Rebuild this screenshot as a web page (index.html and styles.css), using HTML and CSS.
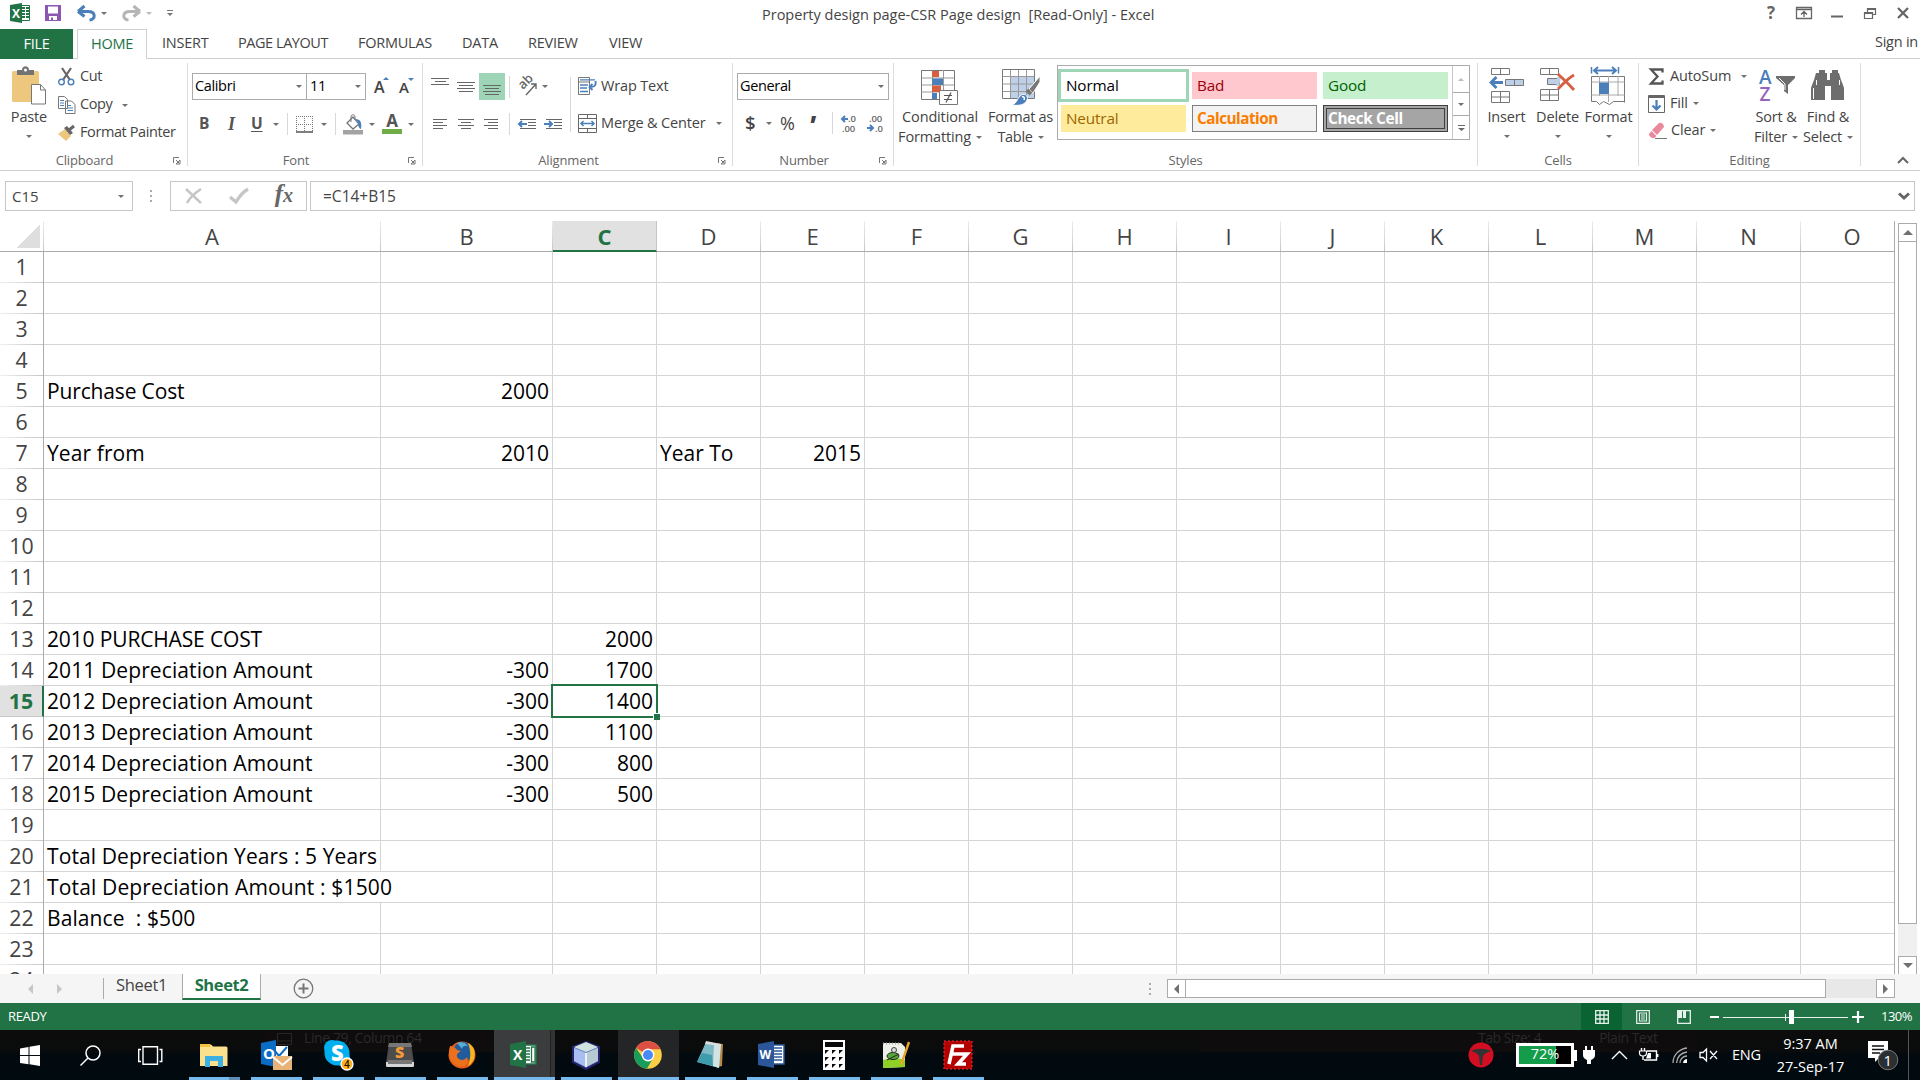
FILE: index.html
```html
<!DOCTYPE html>
<html lang="en">
<head>
<meta charset="utf-8">
<title>Property design page-CSR Page design [Read-Only] - Excel</title>
<link rel="stylesheet" href="styles.css">
</head>
<body>
<div class="app">

<header class="titlebar">
  <div class="quick">
    <svg width="21" height="20" viewBox="0 0 21 20"><path d="M11 2.500h8.500v15H11z" fill="#fff" stroke="#217346"/><path d="M12 5h3M12 8h3M12 11h3M12 14h3M16 5h3M16 8h3M16 11h3M16 14h3" stroke="#217346" stroke-width="2"/><path d="M0 2 12 0v20L0 18z" fill="#217346"/><text x="2" y="14.500" font-size="12" font-weight="700" fill="#fff">X</text></svg>
    <svg width="16" height="16" viewBox="0 0 16 16"><path d="M0 0h16v16H0z" fill="#8c57b0"/><path d="M3 1.500h10v7H3z" fill="#fff"/><path d="M4 11h8v4H4z" fill="#fff"/><path d="M6 12.500h2V15H6z" fill="#8c57b0"/></svg>
    <svg width="19" height="17" viewBox="0 0 19 17"><path d="M1 6.500 7.500 1M1 6.500l6.500 5M2 6.500h9c8 0 8 8 1.500 8.500" fill="none" stroke="#4a7fba" stroke-width="3"/></svg>
    <i class="dd"></i>
    <svg width="19" height="17" viewBox="0 0 19 17"><path d="M18 6.500 11.500 1M18 6.500l-6.500 5M17 6.500H8c-8 0-8 8-1.500 8.500" fill="none" stroke="#b5b5b5" stroke-width="3"/></svg>
    <i class="dd pale"></i>
    <svg width="6" height="6" viewBox="0 0 6 6"><path d="M0 .5h6" stroke="#777"/><path d="M0 3h6L3 6z" fill="#777"/></svg>
  </div>
  <div class="caption">Property design page-CSR Page design&nbsp; [Read-Only] - Excel</div>
  <div class="winbtns">
    <b>?</b>
    <svg width="17" height="13" viewBox="0 0 17 13"><path d="M.5.5h15v11H.500zM1 2.500h14M8 10V5M5 7.500l3-3 3 3" fill="none" stroke="#666" stroke-width="1.300"/></svg>
    <svg width="12" height="13" viewBox="0 0 12 13"><path d="M0 9.500h12" stroke="#666" stroke-width="2"/></svg>
    <svg width="13" height="13" viewBox="0 0 13 13"><path d="M.5 5.500h8v6h-8zM.5 6.500h8M3.500 5V1.500h8v6H9M3.500 2.500h8" fill="none" stroke="#666" stroke-width="1.200"/></svg>
    <svg width="13" height="13" viewBox="0 0 13 13"><path d="m1 1 10 10M11 1 1 11" stroke="#666" stroke-width="2.300"/></svg>
  </div>
</header>

<nav class="tabs">
  <span class="file">FILE</span><span class="home">HOME</span><span class="t1">INSERT</span><span class="t2">PAGE LAYOUT</span><span class="t3">FORMULAS</span><span class="t4">DATA</span><span class="t5">REVIEW</span><span class="t6">VIEW</span><span class="signin">Sign in</span>
</nav>

<section class="ribbon">
  <div class="group g-clip">
    <div class="controls">
      <div class="big">
        <svg width="36" height="40" viewBox="0 0 36 40"><rect x="1" y="5" width="27" height="31" rx="1.500" fill="#eec77f"/><path d="M6 4h5c0-5 7-5 7 0h5v5H6z" fill="#737373"/><circle cx="14.500" cy="4" r="1.500" fill="#fff"/><path d="M20.500 18.500h9l5 5.500v14H20.500z" fill="#fff" stroke="#777"/><path d="M29.500 18.500V24h5" fill="none" stroke="#777"/></svg>
        <span>Paste</span><i class="dd"></i>
      </div>
      <div class="stack">
        <div><svg width="18" height="18" viewBox="0 0 18 18"><path d="m4 0 8 12M13 0 5 12" stroke="#666" stroke-width="2.200"/><circle cx="3.500" cy="14" r="2.800" fill="#fff" stroke="#4a7fba" stroke-width="1.400"/><circle cx="13" cy="14" r="2.800" fill="#fff" stroke="#4a7fba" stroke-width="1.400"/></svg><span>Cut</span></div>
        <div><svg width="18" height="18" viewBox="0 0 18 18"><path d="M.5.5h6l3 3v9h-9zM7.500 5h6l3.500 3.500v9H7.500z" fill="#fff" stroke="#777"/><path d="M2 4.500h4M2 7h4M2 9.500h4M9.500 9.500H13M9.500 12H15M9.500 14.500H15" stroke="#4a7fba"/></svg><span>Copy</span><i class="dd"></i></div>
        <div><svg width="18" height="16" viewBox="0 0 18 16"><path d="m0 9 7-5 6 7-5 5z" fill="#eec77f"/><path d="m6 3 3-2 6 7-3 2z" fill="#666"/><path d="m11 5 5-4" stroke="#666" stroke-width="3"/></svg><span>Format Painter</span></div>
      </div>
    </div>
    <div class="glabel">Clipboard</div><svg class="launch" width="8" height="8" viewBox="0 0 8 8"><path d="M.5 6V.5H6M3 3l3 3M7 3v4H3z" fill="none" stroke="#777"/></svg>
  </div>

  <div class="group g-font">
    <div class="combos"><div class="combo">Calibri<i class="dd"></i></div><div class="combo">11<i class="dd"></i></div><span class="grow">A<i class="up"></i></span><span class="grow small">A<i class="dn"></i></span></div>
    <div class="row2">
      <b>B</b><b class="it">I</b><b class="un">U</b><i class="dd"></i><i class="sep"></i>
      <svg width="17" height="17" viewBox="0 0 17 17"><path d="M.5 0v16M8.500 0v16M16.500 0v16M0 .5h17M0 8.500h17" stroke="#777" stroke-dasharray="1 1"/><path d="M0 16h17" stroke="#555" stroke-width="1.500"/></svg><i class="dd"></i><i class="sep"></i>
      <svg width="20" height="21" viewBox="0 0 20 21"><path d="m4 9 6-6 6 7-6 5z" fill="#fff" stroke="#777" stroke-width="1.300"/><path d="M8 8V3c0-3 4-3 4 0v3" fill="none" stroke="#777"/><path d="M12 5c6 0 7 4 6 10-3-1-3-5-3-7z" fill="#4a7fba"/><path d="M0 16h20v4.500H0z" fill="#a3a3a3"/></svg><i class="dd"></i>
      <span class="fontcolor">A</span><i class="dd"></i>
    </div>
    <div class="glabel">Font</div><svg class="launch" width="8" height="8" viewBox="0 0 8 8"><path d="M.5 6V.5H6M3 3l3 3M7 3v4H3z" fill="none" stroke="#777"/></svg>
  </div>

  <div class="group g-align">
    <div class="alignbox">
      <div class="al1">
        <svg width="18" height="18" viewBox="0 0 18 18"><path d="M0 .5h18M4 3.500h11M0 6.500h18" stroke="#666"/></svg>
        <svg width="18" height="18" viewBox="0 0 18 18"><path d="M0 4.500h18M2 7.500h14M0 10.500h18M2 13.500h14" stroke="#666"/></svg>
        <span class="on"><svg width="18" height="18" viewBox="0 0 18 18"><path d="M0 8.500h18M2 11.500h14M0 14.500h18M2 17.500h14" stroke="#666"/></svg></span>
        <i class="sep"></i>
        <svg width="20" height="20" viewBox="0 0 20 20"><text transform="translate(5 13) rotate(-45)" font-size="13" font-weight="600" fill="#666">ab</text><path d="M8 18 18 7M13 7h5v5" fill="none" stroke="#666" stroke-width="1.400"/></svg><i class="dd"></i>
      </div>
      <div class="al2">
        <svg width="14" height="10" viewBox="0 0 14 10"><path d="M0 .5h14M0 3.500h10M0 6.500h14M0 9.500h10" stroke="#666"/></svg>
        <svg width="16" height="10" viewBox="0 0 16 10"><path d="M0 .5h16M3 3.500h10M0 6.500h16M3 9.500h10" stroke="#666"/></svg>
        <svg width="14" height="10" viewBox="0 0 14 10"><path d="M0 .5h14M4 3.500h10M0 6.500h14M4 9.500h10" stroke="#666"/></svg>
        <i class="sep"></i>
        <svg width="18" height="10" viewBox="0 0 18 10"><path d="M2 .5h16M10 3.500h8M10 6.500h8M2 9.500h16" stroke="#666"/><path d="M9 5H1M4 2 1 5l3 3" fill="none" stroke="#4a7fba" stroke-width="2"/></svg>
        <svg width="18" height="10" viewBox="0 0 18 10"><path d="M2 .5h16M10 3.500h8M10 6.500h8M2 9.500h16" stroke="#666"/><path d="M0 5h8M5 2l3 3-3 3" fill="none" stroke="#4a7fba" stroke-width="2"/></svg>
      </div>
    </div>
    <i class="tallsep"></i>
    <div class="wrapbox">
      <div><svg width="19" height="19" viewBox="0 0 19 19"><path d="M.5.5h11v17H.500zM.5 5h11" fill="#fff" stroke="#777"/><path d="M2 2.800h15M2 8h8M2 11h7M2 14.500h8" stroke="#4a7fba" stroke-width="1.300"/><path d="M17.500 4c1 5-2 6-5 6M14.500 7l-3 3 3 3" fill="none" stroke="#4a7fba" stroke-width="1.900"/></svg><span>Wrap Text</span></div>
      <div><svg width="19" height="19" viewBox="0 0 19 19"><path d="M.5.5h18v18H.500zM.5 4.500h18M.5 14.500h18M9.500 0v4.500M9.500 14.500V19" fill="#fff" stroke="#666"/><path d="M3 9.500h13M5.500 7 3 9.500 5.500 12M13.500 7 16 9.500 13.500 12" fill="none" stroke="#4a7fba" stroke-width="1.500"/></svg><span>Merge &amp; Center</span><i class="dd"></i></div>
    </div>
    <div class="glabel">Alignment</div><svg class="launch" width="8" height="8" viewBox="0 0 8 8"><path d="M.5 6V.5H6M3 3l3 3M7 3v4H3z" fill="none" stroke="#777"/></svg>
  </div>

  <div class="group g-num">
    <div class="combo">General<i class="dd"></i></div>
    <div class="row2"><span class="dollar">$</span><i class="dd"></i><span class="pct">%</span><span class="comma">,</span><i class="sep"></i>
      <svg width="17" height="19" viewBox="0 0 17 19"><path d="M7 5H1M4 2 1 5l3 3" fill="none" stroke="#4a7fba" stroke-width="2"/><text x="7" y="8" font-size="9.500" font-weight="600" fill="#666">.0</text><text x="1" y="17.500" font-size="9.500" font-weight="600" fill="#666">.00</text></svg>
      <svg width="17" height="19" viewBox="0 0 17 19"><path d="M0 14h6M3 11l3 3-3 3" fill="none" stroke="#4a7fba" stroke-width="2"/><text x="2" y="8" font-size="9.500" font-weight="600" fill="#666">.00</text><text x="8" y="17.500" font-size="9.500" font-weight="600" fill="#666">.0</text></svg>
    </div>
    <div class="glabel">Number</div><svg class="launch" width="8" height="8" viewBox="0 0 8 8"><path d="M.5 6V.5H6M3 3l3 3M7 3v4H3z" fill="none" stroke="#777"/></svg>
  </div>

  <div class="group g-styles">
    <div class="big two cond">
      <svg width="38" height="38" viewBox="0 0 38 38"><path d="M.500 3.500h33v29H.500z" fill="#fff" stroke="#777"/><path d="M.5 11h33M.5 18h33M.5 25h33M11.500 3v29M22.500 3v29" stroke="#999"/><path d="M11 4h7v6h-7zM11 18.500h9V25h-9z" fill="#d65f40"/><path d="M11 11.500h11V18H11zM11 26h5v6h-5z" fill="#4a7fba"/><path d="M18.500 23.500h18v14h-18z" fill="#fff" stroke="#777"/><path d="M23 28.500h8M23 32.500h8M30 25.500l-5 10" stroke="#555" stroke-width="1.200"/></svg>
      <span>Conditional</span><span>Formatting<i class="dd"></i></span>
    </div>
    <div class="big two fat">
      <svg width="38" height="38" viewBox="0 0 38 38"><path d="M.5 2.500h32v29H.500z" fill="#fff" stroke="#777"/><path d="M9 10h23v21H9z" fill="#bdd0e8"/><path d="M.5 9.500h32M.5 17h32M.5 24.500h32M8.500 3v28M16.500 3v28M24.500 3v28" stroke="#999"/><path d="M38 9 27 22l4 4 7-11z" fill="#777" stroke="#fff"/><path d="m25 23 4 4" stroke="#777" stroke-width="4"/><path d="M10 38c5-2 5-6 8-9 4-4 9 0 7 4-2 5-8 6-15 5z" fill="#4a7fba" stroke="#fff"/><path d="M20 30c2-1 3 1 2 3" stroke="#fff" fill="none" stroke-width="1.500"/></svg>
      <span>Format as</span><span>Table<i class="dd"></i></span>
    </div>
    <div class="gallery">
      <div class="swatches"><div class="normal">Normal</div><div class="bad">Bad</div><div class="good">Good</div><div class="neutral">Neutral</div><div class="calc">Calculation</div><div class="check">Check Cell</div></div>
      <div class="gscroll"><span><i class="upg"></i></span><span><i class="dd"></i></span><span><svg width="7" height="6" viewBox="0 0 7 6"><path d="M0 .5h7" stroke="#666"/><path d="M0 3h7L3.500 6z" fill="#666"/></svg></span></div>
    </div>
    <div class="glabel">Styles</div>
  </div>

  <div class="group g-cells">
    <div class="big">
      <svg width="37" height="38" viewBox="0 0 37 38"><path d="M3.500 1.500h18v6h-18zM12.500 1.500v6M3.500 24.500h18v11h-18zM12.500 24v12M3.500 30h18" fill="#fff" stroke="#777"/><path d="M17.500 12.500h18v6h-18zM26.500 12.500v6" fill="#bdd0e8" stroke="#777"/><path d="M15 15.500H3M8.500 10 3 15.500 8.500 21" fill="none" stroke="#4a7fba" stroke-width="2.800"/></svg>
      <span>Insert</span><i class="dd"></i>
    </div>
    <div class="big">
      <svg width="37" height="38" viewBox="0 0 37 38"><path d="M1.500 1.500h18v6h-18zM10.500 1.500v6M1.500 22.500h18v11h-18zM10.500 22v12M1.500 28h18" fill="#fff" stroke="#777"/><path d="M8.500 11.500h12v6h-12z" fill="#bdd0e8" stroke="#777"/><path d="M18 10h4l-2 9h-3z" fill="#bdd0e8"/><path d="M19 7c5 5 9 8 16 16M35 8C28 12 24 17 19 22" stroke="#d65f40" stroke-width="2.800" fill="none"/></svg>
      <span>Delete</span><i class="dd"></i>
    </div>
    <div class="big">
      <svg width="37" height="38" viewBox="0 0 37 38"><path d="M1.500 9.500h33v26M1.500 9.500v25h5l3 3 4-3 6 3 4-3h11" fill="#fff" stroke="#777"/><path d="M1.500 15h33M1.500 28h33M9.500 9v20M18.500 9v26M28 9v20" stroke="#aaa"/><path d="M9 15.500h10V27H9z" fill="#4a7fba"/><path d="M1.500 0v6.500M28.500 0v6.500" stroke="#4a7fba" stroke-width="1.500"/><path d="M4 3.500h22M8 0 4 3.500 8 7M22 0l4 3.500L22 7" fill="none" stroke="#4a7fba" stroke-width="2"/></svg>
      <span>Format</span><i class="dd"></i>
    </div>
    <div class="glabel">Cells</div>
  </div>

  <div class="group g-edit">
    <div class="stack">
      <div><svg width="18" height="18" viewBox="0 0 18 18"><path d="M14.500 4.500V1.500H3l6.500 7L3 15.500h11.500v-3" fill="none" stroke="#555" stroke-width="2.300"/></svg><span>AutoSum</span><i class="dd"></i></div>
      <div><svg width="18" height="18" viewBox="0 0 18 18"><path d="M.5.5h16v17H.500z" fill="#fff" stroke="#666"/><path d="M.5 2h16" stroke="#666" stroke-width="2"/><path d="M8.500 5v10M4.500 10.500l4 4 4-4" fill="none" stroke="#4a7fba" stroke-width="2.200"/></svg><span>Fill</span><i class="dd"></i></div>
      <div><svg width="19" height="18" viewBox="0 0 19 18"><path d="m4 8 7-7c3-1 5 2 5 4l-7 8z" fill="#e88a9c"/><path d="m3.500 9 5 5-2 2H4c-3-2-3-3-3-4z" fill="#e88a9c"/><path d="M7 16.500h12" stroke="#777"/></svg><span>Clear</span><i class="dd"></i></div>
    </div>
    <div class="big two">
      <svg width="37" height="38" viewBox="0 0 37 38"><text x="1" y="17" font-size="19" font-weight="600" fill="#4a7fba">A</text><text x="1.500" y="34" font-size="19" font-weight="600" fill="#9565bb">Z</text><path d="M18 9h19v2l-7 7v9l-4-3v-6l-8-7z" fill="#6d6d6d"/><path d="m21 11 6 6v6" fill="none" stroke="#fff"/></svg>
      <span>Sort &amp;</span><span>Filter<i class="dd"></i></span>
    </div>
    <div class="big two">
      <svg width="36" height="38" viewBox="0 0 36 38"><path d="M9 3h6v3h2v7h3V6h2V3h6v3h1l2 7 2 5 1 3v12H21V19h-6v14H1V21l1-3 2-5 2-7h3z" fill="#6d6d6d"/><path d="M3.500 21v11M6.500 13v5M29.500 13v5" stroke="#fff"/></svg>
      <span>Find &amp;</span><span>Select<i class="dd"></i></span>
    </div>
    <div class="glabel">Editing</div>
  </div>
  <svg class="collapse" width="12" height="8" viewBox="0 0 12 8"><path d="m1 7 5-5 5 5" fill="none" stroke="#666" stroke-width="2"/></svg>
</section>

<section class="formulabar">
  <div class="namebox">C15<i class="dd"></i></div>
  <svg class="dots" width="2" height="12" viewBox="0 0 2 12"><path d="M0 1h2M0 6h2M0 11h2" stroke="#aaa" stroke-width="2"/></svg>
  <div class="fxbox">
    <svg width="18" height="16" viewBox="0 0 18 16"><path d="m1 1 15 14M16 1C10 5 5 9 2 15" fill="none" stroke="#c6c6c6" stroke-width="2.500"/></svg>
    <svg width="20" height="16" viewBox="0 0 20 16"><path d="m1 9 6 5C10 9 14 4 19 1" fill="none" stroke="#c6c6c6" stroke-width="3.300"/></svg>
    <span class="fx">f<small>x</small></span>
  </div>
  <div class="formula">=C14+B15<svg width="12" height="8" viewBox="0 0 12 8"><path d="m1 1.500 5 4.500 5-4.500" fill="none" stroke="#666" stroke-width="3"/></svg></div>
</section>

<main class="sheet">
  <div class="gridpane">
    <div class="colheads"><span class="corner"><i></i></span><span>A</span><span>B</span><span class="sel">C</span><span>D</span><span>E</span><span>F</span><span>G</span><span>H</span><span>I</span><span>J</span><span>K</span><span>L</span><span>M</span><span>N</span><span class="last">O</span></div>
    <div class="body">
      <div class="rowheads"><span>1</span><span>2</span><span>3</span><span>4</span><span>5</span><span>6</span><span>7</span><span>8</span><span>9</span><span>10</span><span>11</span><span>12</span><span>13</span><span>14</span><span class="sel">15</span><span>16</span><span>17</span><span>18</span><span>19</span><span>20</span><span>21</span><span>22</span><span>23</span><span>24</span></div>
      <div class="cells">
        <span class="a r5">Purchase Cost</span><span class="b r5">2000</span>
        <span class="a r7">Year from</span><span class="b r7">2010</span><span class="d r7">Year To</span><span class="e r7">2015</span>
        <span class="a r13">2010 PURCHASE COST</span><span class="c r13">2000</span>
        <span class="a r14">2011 Depreciation Amount</span><span class="b r14">-300</span><span class="c r14">1700</span>
        <span class="a r15">2012 Depreciation Amount</span><span class="b r15">-300</span><span class="c r15 active">1400</span>
        <span class="a r16">2013 Depreciation Amount</span><span class="b r16">-300</span><span class="c r16">1100</span>
        <span class="a r17">2014 Depreciation Amount</span><span class="b r17">-300</span><span class="c r17">800</span>
        <span class="a r18">2015 Depreciation Amount</span><span class="b r18">-300</span><span class="c r18">500</span>
        <span class="a r20">Total Depreciation Years : 5 Years</span>
        <span class="a r21 spill">Total Depreciation Amount : $1500</span>
        <span class="a r22">Balance&nbsp; : $500</span>
      </div>
    </div>
  </div>
  <div class="vscroll"><span class="btn"><i class="tri-u"></i></span><span class="thumb"></span><span class="track"></span><span class="btn"><i class="tri-d"></i></span></div>
</main>

<footer class="sheettabs">
  <i class="tri-l pale"></i><i class="tri-r pale"></i><i class="tabsep"></i>
  <span class="s1">Sheet1</span><span class="s2">Sheet2</span>
  <svg class="plus" width="21" height="21" viewBox="0 0 21 21"><circle cx="10.500" cy="10.500" r="9.300" fill="none" stroke="#777" stroke-width="1.300"/><path d="M10.500 5.500v10M5.500 10.500h10" stroke="#777" stroke-width="2"/></svg>
  <svg class="hdots" width="2" height="12" viewBox="0 0 2 12"><path d="M0 1h2M0 6h2M0 11h2" stroke="#aaa" stroke-width="2"/></svg>
  <div class="hscroll"><span class="btn"><i class="tri-l"></i></span><span class="thumb"></span><span class="track"></span><span class="btn"><i class="tri-r"></i></span></div>
</footer>

<div class="status">
  <span class="ready">READY</span>
  <span class="view on"><svg width="14" height="14" viewBox="0 0 14 14"><path d="M.7.7h12.600v12.600H.7zM.7 5h12.600M.7 9h12.600M5 .7v12.600M9 .7v12.600" fill="none" stroke="#e8f2ec" stroke-width="1.300"/></svg></span>
  <span class="view"><svg width="14" height="14" viewBox="0 0 14 14"><path d="M.7.7h12.600v12.600H.7zM3.500 3h7v8h-7zM5 5h4M5 7h4M5 9h4" fill="none" stroke="#e8f2ec" stroke-width="1.200"/></svg></span>
  <span class="view"><svg width="14" height="14" viewBox="0 0 14 14"><path d="M.7.7h12.600v12.600H.7z" fill="none" stroke="#e8f2ec" stroke-width="1.300"/><path d="M1 1h4v7H1zM6 1h3v7H6z" fill="#e8f2ec"/></svg></span>
  <svg class="zoom" width="155" height="16" viewBox="0 0 155 16"><path d="M0 8h9" stroke="#fff" stroke-width="2"/><path d="M13 8.500h125M75.500 5v7" stroke="#e8f2ec"/><path d="M79 1h5v14h-5z" fill="#fff"/><path d="M142 8h12M148 2v12" stroke="#fff" stroke-width="2.200"/></svg>
  <span class="pctz">130%</span>
</div>

<div class="taskbar">
  <div class="ghost g1"><svg width="15" height="12" viewBox="0 0 15 12"><path d="M.5.5h14v11H.500zM.5 8h14" fill="none" stroke="#282828"/></svg>Line 79, Column 64</div>
  <div class="ghost g2"><span>Tab Size: 4</span><span>Plain Text</span></div>
  <div class="sys">
    <svg width="20" height="21" viewBox="0 0 20 21"><path d="M0 3.500 8.500 2v8H0zM9.500 1.800 20 0v10H9.500zM0 11h8.500v8.200L0 18zM9.500 11H20v10L9.500 19.300z" fill="#fff"/></svg>
    <svg width="21" height="21" viewBox="0 0 21 21"><circle cx="13" cy="8" r="7" fill="none" stroke="#fff" stroke-width="1.500"/><path d="m8 13-7.500 7.500" stroke="#fff" stroke-width="1.500"/></svg>
    <svg width="25" height="19" viewBox="0 0 25 19"><path d="M5 .7h14.500v17.500H5zM3 3.500H.7v12H3M21.500 3.500h2.300v12h-2.300" fill="none" stroke="#fff" stroke-width="1.400"/></svg>
  </div>
  <div class="apps">
    <span class="more"><svg width="30" height="30" viewBox="0 0 30 30"><path d="M1 4.500h11l2 2h13q1.500 0 1.500 1.500v18H1z" fill="#fbe08d"/><path d="M1 4h10v3H1z" fill="#f2c23e"/><path d="M6 27V16h18v11h-5v-6h-8v6z" fill="#3cb0e5"/></svg></span>
    <span><svg width="34" height="34" viewBox="0 0 34 34"><path d="M13 8h16v14H13z" fill="#fff"/><path d="m15 12 5 6 8-9" fill="none" stroke="#0a6cc4" stroke-width="2"/><path d="M2 5 17 2v27L2 26z" fill="#0a6cc4"/><text x="4" y="21" font-size="15" font-weight="700" fill="#fff">O</text><path d="M14 18h19v14H14z" fill="#e8b376"/><path d="m14 19 9.500 8L33 19" fill="none" stroke="#fff" stroke-width="1.800"/></svg></span>
    <span><svg width="34" height="34" viewBox="0 0 34 34"><circle cx="11" cy="10" r="8" fill="#00aff0"/><circle cx="16" cy="15" r="12.500" fill="#00aff0"/><circle cx="21" cy="20" r="8" fill="#00aff0"/><text x="10" y="23" font-size="22" font-weight="800" fill="#fff">S</text><circle cx="26" cy="26" r="6" fill="#ffaf1c" stroke="#fff" stroke-width="1.300"/><text x="23" y="29.700" font-size="10" font-weight="600" fill="#111">4</text></svg></span>
    <span><svg width="30" height="30" viewBox="0 0 30 30"><path d="M4 3h22l3 20v4H1v-4z" fill="#4c4c4c"/><path d="M1 22h28v4q0 1-2 1H3q-2 0-2-1z" fill="#d5d5d5"/><path d="M3 20h24v4H3z" fill="#777"/><path d="M4 3h22l1 4H3z" fill="#777"/><text x="10" y="18" font-size="16" font-weight="800" fill="#f59a38">S</text></svg></span>
    <span><svg width="30" height="30" viewBox="0 0 30 30"><circle cx="15" cy="15" r="13.500" fill="#e55b17"/><circle cx="16" cy="12" r="10" fill="#225b9d"/><path d="M21 3c9 4 9 18 0 23 3-8 3-15 0-23z" fill="#f8b51d"/><path d="M3 6c2 0 5 1 7 4l4 1c-4 2-6 5-2 8 3 2 6 1 8-2 3 7-3 11-9 9C4 23 0 16 3 6z" fill="#ed711c"/><path d="M10 3c4-2 9 0 11 3-4-1-6 1-6 3z" fill="#58add7"/></svg></span>
    <span class="cur"><svg width="30" height="30" viewBox="0 0 30 30"><path d="M15 5h12v19H15z" fill="#fff" stroke="#217346" stroke-width="1.500"/><path d="M16 8h5M16 11h5M16 14h5M16 17h5M16 20h5M22.500 7h3.500v15h-3.500z" stroke="#217346" fill="none" stroke-width="1.300"/><path d="M1 4 17 1v27L1 25z" fill="#217346"/><text x="4" y="20" font-size="14" font-weight="700" fill="#fff">X</text></svg></span>
    <span><svg width="30" height="30" viewBox="0 0 30 30"><path d="m15 2 13 5v15l-13 7-13-7V7z" fill="#6a80c4" stroke="#24246d" stroke-width="2"/><path d="m15 2 12 5-12 5L3 7z" fill="#cfe2de"/><path d="m3 8 12 5v14L3 21z" fill="#a8bef3"/><path d="m27 8-12 5v14l12-6z" fill="#b7c9d2"/><path d="M15 13v14" stroke="#fff" stroke-width="1.500"/></svg></span>
    <span class="hov"><svg width="30" height="30" viewBox="0 0 30 30"><circle cx="15" cy="15" r="13.800" fill="#fbcf45"/><path d="M15 15 3 8a13.800 13.800 0 0 1 24.500 1.200H15z" fill="#dd4f43"/><path d="M3 8a13.800 13.800 0 0 0 11 20.800L20 18l-5-3-5 3z" fill="#179c5c"/><circle cx="15" cy="15" r="6.400" fill="#fff"/><circle cx="15" cy="15" r="5" fill="#4a8af4"/></svg></span>
    <span><svg width="30" height="30" viewBox="0 0 30 30"><path d="m14 3 14 1-1 22-4 1z" fill="#b98846"/><path d="M11 2 26 4l-2 24L2 22z" fill="#7db9c6"/><path d="m19 4 7 0-2 24-6-2z" fill="#d4e2e2"/><path d="m11 1 15 3v2L10 4z" fill="#ddd"/><path d="m2 22 5-9 10 2 1 11z" fill="#3d9dad"/></svg></span>
    <span><svg width="30" height="30" viewBox="0 0 30 30"><path d="M15 5h12v19H15z" fill="#fff" stroke="#2b579a" stroke-width="1.500"/><path d="M17 8h8M17 11h8M17 14h8M17 17h8M17 20h8" stroke="#2b579a" stroke-width="1.500"/><path d="M1 4 17 1v27L1 25z" fill="#2b579a"/><text x="2.500" y="19" font-size="12" font-weight="700" fill="#fff">W</text></svg></span>
    <span><svg width="22" height="30" viewBox="0 0 22 30"><path d="M0 0h22v30H0z" fill="#fff"/><path d="M2 2h18v5H2zM2 10h4l-4 4zM9 10h4l-4 4zM16 10h4l-4 4zM2 17h4l-4 4zM9 17h4l-4 4zM16 17h4l-4 4zM2 24h4l-4 4zM9 24h4l-4 4zM16 24h4l-4 4z" fill="#0a0a0a"/></svg></span>
    <span><svg width="30" height="30" viewBox="0 0 30 30"><path d="M2 3h18l4 4v20l-22 1z" fill="#eef0e8"/><path d="M2 20q11-4 22 0v7l-22 1z" fill="#8fd025"/><path d="M2 3.500h18" stroke="#aaa" stroke-dasharray="1 2" stroke-width="2"/><ellipse cx="12" cy="16" rx="6" ry="3.500" fill="#55a83c" stroke="#222"/><circle cx="13" cy="10" r="2.500" fill="#ddd" stroke="#444"/><path d="m6 20 12-6" stroke="#222"/><path d="M28 2 20 25" stroke="#e8a52c" stroke-width="2.400"/></svg></span>
    <span><svg width="30" height="30" viewBox="0 0 30 30"><path d="M1 1h28v28H1z" fill="#b30000" stroke="#e33" stroke-dasharray="2 2"/><path d="M6 24 10 6h11M8 14h9M15 14h9l-9 10h8" fill="none" stroke="#fff" stroke-width="3.600"/></svg></span>
  </div>
  <div class="tray">
    <svg width="26" height="26" viewBox="0 0 26 26"><circle cx="13" cy="13" r="12.500" fill="#d40e22"/><path d="M3 9c6-3 14-3 20 0-4 1-7 3-8 5l-1 9h-2l-1-9c-1-2-4-4-8-5z" fill="#333"/></svg>
    <span class="battery"><i></i><b>72%</b></span>
    <svg width="12" height="18" viewBox="0 0 12 18"><path d="M2 0h2v4h4V0h2v4h2v5c0 3-2 4-4 5v4H4v-4c-2-1-4-2-4-5V4h2z" fill="#fff"/></svg>
    <svg width="17" height="10" viewBox="0 0 17 10"><path d="m1 9 7.500-7.500L16 9" fill="none" stroke="#fff" stroke-width="1.400"/></svg>
    <svg width="20" height="14" viewBox="0 0 20 14"><path d="M8 3h9.500v9H5M18.700 6v3M2.500 0v3M5.500 0v3M4 8v4" fill="none" stroke="#fff" stroke-width="1.400"/><path d="M.5 3h7v2c0 2-1 3-3.500 3S.5 7 .5 5z" fill="none" stroke="#fff" stroke-width="1.200"/><path d="M9 5h3v5.500H7z" fill="#fff"/></svg>
    <svg width="16" height="17" viewBox="0 0 16 17"><path d="M1 16C1 8 7 2 15 1M4.500 16C5 10 9 6 15 5M8 16c0-4 3-7 7-7" fill="none" stroke="#aaa" stroke-width="1.300"/><path d="M11 16c0-2 2-4 4-4v4z" fill="#fff"/></svg>
    <svg width="19" height="14" viewBox="0 0 19 14"><path d="M1 4.500h3L7.500 1v12L4 9.500H1zM11 3l7 8M18 3l-7 8" fill="none" stroke="#fff" stroke-width="1.300"/></svg>
    <span class="eng">ENG</span>
    <span class="clock">9:37 AM<br>27-Sep-17</span>
    <svg class="note" width="31" height="31" viewBox="0 0 31 31"><path d="M0 1h20v17h-9l-4 4v-4H0z" fill="#fff"/><path d="M4 6h12M4 9.500h12M4 13h8" stroke="#111" stroke-width="1.400"/><circle cx="20" cy="20" r="9.800" fill="#2b2f31" stroke="#777"/><text x="15.500" y="25.500" font-size="15" fill="#fff">1</text></svg>
    <i class="peek"></i>
  </div>
</div>

</div>
</body>
</html>
```
FILE: styles.css
```css
* { box-sizing: border-box; }
body { margin: 0; background: #fff; overflow: hidden; }
.app {
  width: 1920px; height: 1080px; display: flex; flex-direction: column;
  font: 14.5px/20px "Open Sans", "Noto Sans", sans-serif;
  color: #444; white-space: nowrap; overflow: hidden;
}
svg { display: block; flex: none; overflow: visible; }
i { font-style: normal; }
.dd, .upg, .up, .dn { display: block; width: 0; height: 0; flex: none; border: 3px solid transparent; border-top: 3px solid #707070; border-bottom: 0; }
.dd.pale { border-top-color: #bbb; }
.sep { width: 1px; height: 22px; background: #d8d8d8; display: block; }

/* title bar */
.titlebar { height: 29px; display: grid; grid-template-columns: 762px 1fr 153px; align-items: start; flex: none; }
.quick { display: grid; grid-template-columns: 35px 32px 24px 21px 24px 21px 10px; padding: 3px 0 0 10px; align-items: center; }
.caption { padding-top: 4px; line-height: 21px; }
.winbtns { display: grid; grid-template-columns: 29px 35px 33px 33px 13px; height: 26px; align-items: center; }
.winbtns b { font: 700 17px/24px "Open Sans", sans-serif; color: #666; }

/* ribbon tabs */
.tabs { height: 30px; flex: none; display: flex; border-bottom: 1px solid #d0d0d0; line-height: 28px; letter-spacing: -0.25px; }
.tabs span { flex: none; }
.file { width: 73px; height: 30px; background: #217346; color: #fff; text-align: center; line-height: 29px; }
.home { width: 70px; height: 30px; margin-left: 4px; border: 1px solid #d0d0d0; border-bottom: 0; background: #fff; color: #217346; text-align: center; line-height: 27px; }
.t1 { width: 76px; margin-left: 15px; }
.tabs .t2 { width: 120px; letter-spacing: -0.45px; }
.t3 { width: 104px; }
.t4 { width: 66px; }
.t5 { width: 81px; }
.t6 { width: 120px; }
.tabs .signin { margin-left: auto; width: 45px; line-height: 25px; }

/* ribbon */
.ribbon { height: 112px; flex: none; display: flex; border-bottom: 1px solid #d0d0d0; position: relative; letter-spacing: -0.15px; }
.group { position: relative; height: 103px; margin-top: 4px; border-right: 1px solid #dcdcdc; flex: none; }
.g-clip { width: 188px; }
.g-font { width: 235px; }
.g-align { width: 310px; display: flex; }
.g-num { width: 161px; }
.g-styles { width: 584px; display: flex; }
.g-cells { width: 161px; display: flex; }
.g-edit { width: 222px; display: flex; }
.glabel { position: absolute; left: 0; right: 18px; top: 87px; font-size: 13px; text-align: center; color: #666; }
.g-styles .glabel, .g-cells .glabel, .g-edit .glabel { right: 0; }
.launch { position: absolute; right: 6px; top: 94px; }
.collapse { position: absolute; left: 1897px; top: 97px; }
.controls { display: flex; }
.big { width: 58px; padding-top: 3px; display: flex; flex-direction: column; align-items: center; text-align: center; }
.big svg { height: 40px; margin-bottom: 1px; }
.big > .dd { margin-top: 8px; }
.two span:last-child { display: flex; align-items: center; gap: 5px; }
.stack { display: flex; flex-direction: column; }
.stack div { height: 28px; display: flex; align-items: center; }
.stack span { padding-bottom: 2px; }
.stack svg { margin-right: 4px; }
.stack .dd { margin-left: 10px; }
.g-clip .stack svg { width: 18px; }
.g-clip .stack div span { letter-spacing: -0.4px; }

.combos { display: flex; padding: 10px 0 0 4px; }
.combo { height: 27px; border: 1px solid #ababab; display: flex; align-items: center; justify-content: space-between; padding: 0 4px 1px 2px; color: #000; letter-spacing: -0.35px; }
.combos .combo { width: 115px; }
.combos .combo + .combo { width: 60px; margin-left: -1px; padding-left: 3px; }
.grow { width: 25px; padding-left: 8px; font-weight: 600; font-size: 16px; line-height: 28px; display: flex; align-items: center; }
.grow.small { font-size: 15px; }
.grow .up { border-top: 0; border-bottom: 3px solid #4a7fba; align-self: flex-start; margin-top: 4px; margin-left: -1px; }
.grow .dn { border-top-color: #4a7fba; align-self: flex-start; margin-top: 5px; margin-left: -1px; }
.row2 { display: grid; align-items: center; height: 22px; margin-top: 12px; }
.g-font .row2 { grid-template-columns: 27px 25px 22px 14px 9px 25px 14px 8px 26px 13px 26px 8px; padding-left: 11px; }
.row2 b { font-size: 15.5px; font-weight: 700; color: #555; }
.g-font .row2 b:not(.it) { padding-bottom: 2px; }
.row2 .it { font-family: "Liberation Serif", serif; font-style: italic; font-size: 18px; padding-left: 2px; }
.un { text-decoration: underline; text-underline-offset: 2px; }
.fontcolor { width: 20px; height: 20px; border-bottom: 5px solid #70ad47; font-weight: 700; font-size: 17px; line-height: 13px; text-align: center; color: #555; }

.alignbox { width: 147px; padding-top: 10px; }
.al1, .al2 { display: grid; align-items: center; }
.al1 { height: 26px; grid-template-columns: 26px 22px 30px 9px 24px 8px; padding-left: 8px; }
.on { display: block; }
.al1 .on { width: 26px; height: 27px; background: #9fd5b7; padding: 4px; }
.al2 { height: 22px; margin-top: 14px; grid-template-columns: 25px 26px 25px 9px 26px 18px; padding-left: 10px; }
.tallsep { width: 1px; height: 55px; margin-top: 14px; background: #d8d8d8; }
.wrapbox { padding: 10px 0 0 7px; }
.wrapbox div { display: flex; align-items: center; height: 27px; margin-bottom: 10px; gap: 4px; }
.wrapbox span { padding-bottom: 1px; }
.wrapbox .dd { margin-left: 6px; }

.g-num .combo { width: 152px; margin: 10px 0 0 4px; }
.g-num .row2 { grid-template-columns: 21px 15px 29px 22px 9px 26px 17px; padding-left: 12px; margin-top: 12px; }
.dollar { font-weight: 600; font-size: 18.5px; }
.pct { font-size: 18px; margin-left: -1px; }
.comma { font-size: 24px; font-weight: 800; line-height: 10px; margin-top: -24px; }

.g-styles .big { width: 92px; }
.g-styles .big.fat { width: 69px; margin-right: 2px; letter-spacing: -0.3px; }
.gallery { width: 413px; height: 75px; margin-top: 2px; border: 1px solid #ababab; display: flex; justify-content: space-between; }
.swatches { display: grid; grid-template-columns: 125px 125px 125px; grid-auto-rows: 27px; gap: 6px; padding: 6px 0 0 3px; }
.swatches div { padding-left: 5px; line-height: 27px; font-size: 15.3px; }
.normal { color: #000; outline: 3px solid #9fd5b7; }
.bad { background: #ffc7ce; color: #9c0006; }
.good { background: #c6efce; color: #006100; }
.neutral { background: #ffeb9c; color: #9c6500; }
.swatches .calc { background: #f2f2f2; color: #fa7d00; border: 1px solid #7f7f7f; font-weight: 700; line-height: 25px; padding-left: 4px; letter-spacing: -0.5px; }
.swatches .check { background: #a5a5a5; color: #fff; border: 4px double #3f3f3f; font-weight: 700; line-height: 19px; padding-left: 1px; letter-spacing: -0.35px; }
.gscroll { width: 17px; border-left: 1px solid #c6c6c6; display: grid; grid-template-rows: 26px 23px 24px; }
.gscroll span { display: grid; place-items: center; }
.gscroll span + span { border-top: 1px solid #ababab; }
.upg { border-top: 0; border-bottom: 3px solid #bbb; }

.g-cells .big { width: 51px; margin-left: 3px; }
.g-cells .big + .big { margin-left: 0; }
.g-edit .stack { width: 111px; padding-left: 9px; }
.g-edit .stack div { height: 27px; }
.g-edit .stack .dd { margin-left: 5px; }
.g-edit .stack div:first-child .dd { margin-left: 10px; }
.g-edit .big { width: 52px; }

/* formula bar */
.formulabar { height: 50px; flex: none; display: flex; align-items: center; }
.namebox, .fxbox, .formula { height: 30px; border: 1px solid #c6c6c6; display: flex; align-items: center; justify-content: space-between; }
.namebox { width: 128px; margin-left: 5px; padding: 0 8px 0 6px; font-size: 15px; }
.dots { margin: 0 18px 0 17px; }
.fxbox { width: 137px; padding: 0 13px 0 14px; }
.fx { font: italic 700 25px/24px "Liberation Serif", serif; color: #666; margin-top: -4px; }
.fx small { font-size: 20px; }
.formula { width: 1605px; margin-left: 3px; padding: 0 4px 0 12px; font-size: 15.5px; }

/* worksheet */
.sheet { height: 753px; flex: none; display: flex; background: #fff; }
.gridpane { width: 1895px; flex: none; border-right: 1px solid #ababab; border-bottom: 1px solid #ababab; height: 754px; overflow: hidden; }
.colheads, .cells { display: grid; grid-template-columns: 337px 172px repeat(12, 104px) 94px; }
.colheads { grid-template-columns: 44px 337px 172px repeat(12, 104px) 94px; height: 31px; border-bottom: 1px solid #ababab; font-size: 22px; line-height: 31px; text-align: center; background: #fff; margin-right: -1px; }
.colheads span { height: 30px; border-right: 1px solid; border-image: linear-gradient(#eee, #c6c6c6) 1; }
.colheads .sel { height: 31px; background: #e1e1e1; color: #217346; font-weight: 700; border-bottom: 2px solid #217346; border-image: none; border-right: 1px solid #c6c6c6; }
.colheads .last { border: 0; padding-left: 8px; }
.corner { display: flex; justify-content: flex-end; align-items: flex-end; padding: 0 3px 3px 0; }
.corner i { width: 23px; height: 23px; background: linear-gradient(135deg, transparent 50%, #dedede 50%); }
.body { display: flex; }
.rowheads { width: 44px; flex: none; font-size: 21.3px; line-height: 29px; text-align: center; border-right: 1px solid #ababab; }
.rowheads span { display: block; height: 31px; border-bottom: 1px solid; border-image: linear-gradient(90deg, #f0f0f0, #c6c6c6) 1; }
.rowheads .sel { background: #e1e1e1; color: #217346; font-weight: 700; margin-right: -1px; border-right: 2px solid #217346; border-image: none; border-bottom: 1px solid #c6c6c6; }
.cells {
  grid-template-rows: repeat(24, 31px); width: 1850px; flex: none;
  color: #000; font-size: 21px; line-height: 30px;
  background:
    linear-gradient(90deg, transparent 336px, #d4d4d4 336px, #d4d4d4 337px, transparent 337px),
    repeating-linear-gradient(90deg, transparent 0, transparent 103px, #d4d4d4 103px, #d4d4d4 104px) 405px 0 / 1445px 100% no-repeat,
    repeating-linear-gradient(transparent 0, transparent 30px, #d4d4d4 30px, #d4d4d4 31px);
}
.cells span { height: 30px; }
.a { grid-column: 1; padding-left: 3px; letter-spacing: 0.1px; }
.a.r5, .a.r13 { letter-spacing: -0.15px; }
.b { grid-column: 2; text-align: right; padding-right: 4px; }
.c { grid-column: 3; text-align: right; padding-right: 4px; }
.d { grid-column: 4; padding-left: 3px; }
.e { grid-column: 5; text-align: right; padding-right: 4px; }
.r5 { grid-row: 5; } .r7 { grid-row: 7; } .r13 { grid-row: 13; } .r14 { grid-row: 14; }
.r15 { grid-row: 15; } .r16 { grid-row: 16; } .r17 { grid-row: 17; } .r18 { grid-row: 18; }
.r20 { grid-row: 20; } .r21 { grid-row: 21; } .r22 { grid-row: 22; }
.spill { background: #fff; grid-column: 1 / 3; margin-right: 1px; letter-spacing: 0.15px; }
.active { position: relative; }
.active::before { content: ""; position: absolute; inset: -2px -1px -2px -2px; border: 2px solid #217346; }
.active::after { content: ""; position: absolute; right: -3px; bottom: -4px; width: 6px; height: 6px; background: #217346; border: solid #fff; border-width: 1px 0 0 1px; }

.btn { display: grid; place-items: center; width: 19px; height: 19px; border: 1px solid #ababab; background: #fff; flex: none; }
.tri-u, .tri-d, .tri-l, .tri-r { display: block; width: 0; height: 0; border: 5px solid transparent; color: #707070; }
.tri-u { border-top: 0; border-bottom-color: currentColor; }
.tri-d { border-bottom: 0; border-top-color: currentColor; }
.tri-l { border-left: 0; border-right-color: currentColor; }
.tri-r { border-right: 0; border-left-color: currentColor; }
.vscroll { width: 19px; margin: 2px 0 0 3px; display: flex; flex-direction: column; height: 752px; }
.vscroll .thumb { height: 683px; margin-top: -1px; border: 1px solid #ababab; background: #fff; }
.vscroll .track { flex: 1; background: #f0f0f0; }

.sheettabs { height: 29px; flex: none; background: #f5f5f5; display: flex; align-items: center; }
.sheettabs > .tri-l { margin-left: 28px; }
.sheettabs > .tri-r { margin-left: 24px; }
.sheettabs > .pale { color: #c6c6c6; }
.tabsep { width: 1px; height: 21px; margin-left: 41px; background: #ababab; }
.s1 { width: 78px; padding-left: 12px; font-size: 16.5px; letter-spacing: -0.3px; align-self: flex-start; line-height: 22px; }
.s2 { width: 79px; height: 26px; align-self: flex-start; background: #fff; border: 1px solid #ababab; border-top: 0; border-bottom: 2px solid #217346; color: #217346; font-size: 16.5px; letter-spacing: -0.4px; font-weight: 700; text-align: center; line-height: 22px; z-index: 1; }
.plus { margin-left: 32px; }
.hdots { margin-left: 835px; }
.hscroll { display: flex; width: 728px; margin-left: 16px; }
.hscroll .thumb { width: 641px; margin-left: -1px; border: 1px solid #ababab; background: #fff; }
.hscroll .track { flex: 1; background: #e8e8e8; }

/* status bar */
.status { height: 27px; flex: none; background: #217346; color: #fff; display: flex; align-items: center; font-size: 13px; letter-spacing: -0.1px; }
.ready { width: 1581px; padding: 0 0 2px 8px; letter-spacing: -0.35px; }
.view { width: 41px; height: 27px; display: grid; place-items: center; }
.view.on { background: #0a6332; }
.zoom { margin-left: 6px; }
.pctz { margin-left: 16px; letter-spacing: -0.5px; padding-bottom: 1px; }

/* taskbar */
.taskbar { position: relative; height: 50px; flex: none; display: flex; color: #fff; background: linear-gradient(#0c0c0c 0, #0a0b0c 44%, #020a0f 46%, #010a0f 100%); isolation: isolate; }
.ghost { position: absolute; z-index: -1; top: 0; height: 22px; background: #0e0c0c; color: #2a2a2a; font-size: 14px; line-height: 16px; display: flex; align-items: flex-start; }
.g1 { left: 263px; width: 230px; padding-left: 14px; gap: 12px; letter-spacing: -0.4px; }
.g1 svg { margin-top: 3px; }
.g2 { left: 1200px; width: 497px; padding-left: 278px; gap: 58px; letter-spacing: -0.5px; }
.sys { display: grid; grid-template-columns: 60px 58px 46px; padding-left: 20px; align-items: center; }
.apps { display: flex; }
.apps span { width: 62px; height: 50px; display: grid; place-items: center; padding-right: 2px; background: linear-gradient(#76b9ed, #76b9ed) 5px 47px / 51px 3px no-repeat; }
.apps .more { background: linear-gradient(90deg, #76b9ed 40px, #5d8db3 40px) 5px 47px / 51px 3px no-repeat; }
.apps .cur { background: linear-gradient(#76b9ed, #76b9ed) 0 47px / 61px 3px no-repeat, linear-gradient(90deg, transparent 56px, #222 56px, #222 57px, #333 57px) 0 0 / 61px 100% no-repeat, linear-gradient(90deg, #3b3c3d 61px, transparent 61px); }
.apps .hov { background: linear-gradient(#76b9ed, #76b9ed) 0 47px / 61px 3px no-repeat, linear-gradient(90deg, #232526 61px, transparent 61px); }
.tray { margin-left: 478px; display: grid; grid-template-columns: 48px 67px 28px 28px 33px 27px 33px 36px 85px 55px 1px; align-items: center; }
.battery { width: 58px; height: 24px; border: 3px solid #fff; background: linear-gradient(90deg, #139c49 37px, #000 37px); text-align: center; position: relative; line-height: 16px; }
.battery b { font-weight: 400; }
.battery i { position: absolute; left: 55px; top: 4px; width: 3px; height: 11px; background: #fff; }
.eng { font-size: 14.5px; letter-spacing: -0.2px; }
.clock { line-height: 23px; text-align: center; padding-bottom: 1px; }
.note { margin-left: 15px; }
.peek { width: 1px; height: 50px; background: #555; }
```
